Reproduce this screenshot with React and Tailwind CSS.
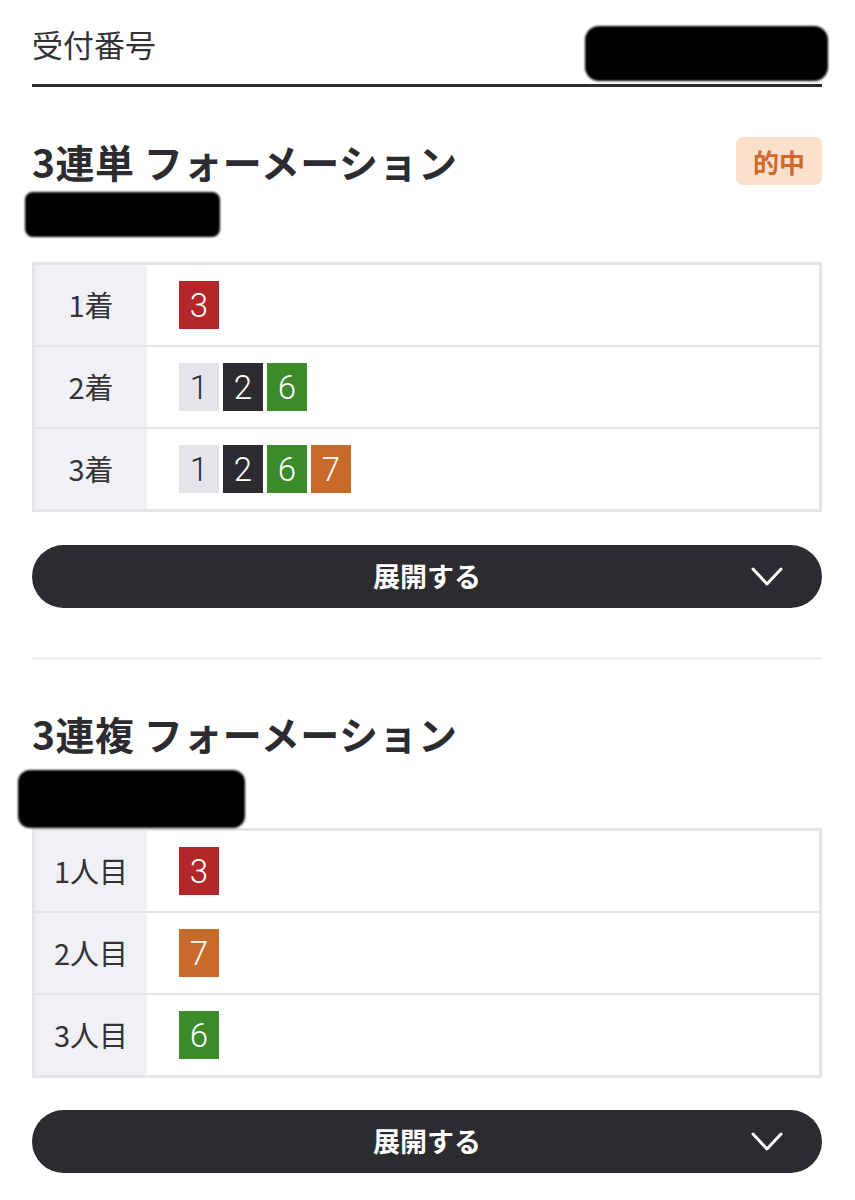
import React from "react";

const BOX = {
  red: "bg-[#b3262a] text-white",
  gray: "bg-[#e4e4e9] text-[#2c2c30]",
  dark: "bg-[#2c2c30] text-white",
  green: "bg-[#3b8b2b] text-white",
  orange: "bg-[#c86a29] text-white",
};

const COLOR = { 1: "gray", 2: "dark", 3: "red", 6: "green", 7: "orange" };

function Num({ n }) {
  return (
    <div
      className={`w-[40px] h-[48px] flex items-center justify-center text-[33px] font-light leading-none ${BOX[COLOR[n]]}`}
      style={{ fontFamily: "Roboto, 'Liberation Sans', sans-serif" }}
    >
      {n}
    </div>
  );
}

function Table({ rows }) {
  return (
    <div className="border-[3px] border-[#e4e4e9]">
      {rows.map((r, i) => (
        <div key={r.label} className={i === 0 ? "flex h-[80px]" : "flex h-[82px] border-t-2 border-[#e4e4e9]"}>
          <div className="w-[112px] bg-[#f0f0f5] flex items-center justify-center text-[29px] text-[#333336]">
            {r.label}
          </div>
          <div className="flex-1 flex items-center gap-[4px] pl-[32px]">
            {r.nums.map((n, j) => <Num key={j} n={n} />)}
          </div>
        </div>
      ))}
    </div>
  );
}

function ExpandButton() {
  return (
    <button className="relative w-full h-[63px] rounded-full bg-[#2c2c30] flex items-center justify-center">
      <span className="text-white text-[27px] font-bold">展開する</span>
      <svg className="absolute right-[38px] top-[20px]" width="34" height="24" viewBox="0 0 34 24" fill="none">
        <polyline points="3,4 17,19 31,4" stroke="white" strokeWidth="3" strokeLinecap="round" strokeLinejoin="round" />
      </svg>
    </button>
  );
}

export default function App() {
  return (
    <div className="bg-white min-h-[1200px] w-[855px] overflow-hidden" style={{ fontFamily: '"Noto Sans CJK JP", "Noto Sans", sans-serif' }}>
      <div className="mx-[32px] w-[790px]">
        <div className="h-[87px] flex items-center justify-between border-b-[3px] border-[#2c2c30] pt-[4px]">
          <div className="text-[31px] text-[#333336]">受付番号</div>
          <div className="w-[243px] h-[55px] bg-black rounded-[14px] -mr-[6px] mt-[18px] blur-[1px]" />
        </div>

        <div className="mt-[50px] h-[48px] flex items-center justify-between">
          <h2 className="text-[39px] font-bold text-[#2c2c30] tracking-[0.5px]">3連単 フォーメーション</h2>
          <div className="w-[86px] h-[48px] rounded-[7px] bg-[#fbe0cc] text-[#d0692a] text-[26px] font-bold flex items-center justify-center">的中</div>
        </div>
        <div className="mt-[7px] -ml-[7px] w-[195px] h-[45px] bg-black rounded-[8px] blur-[1px]" />

        <div className="mt-[25px]">
          <Table rows={[
            { label: "1着", nums: [3] },
            { label: "2着", nums: [1, 2, 6] },
            { label: "3着", nums: [1, 2, 6, 7] },
          ]} />
        </div>
        <div className="mt-[33px]"><ExpandButton /></div>

        <div className="mt-[49px] h-[3px] bg-[#f0f0f5]" />

        <div className="mt-[49px] h-[48px] flex items-center">
          <h2 className="text-[39px] font-bold text-[#2c2c30] tracking-[0.5px]">3連複 フォーメーション</h2>
        </div>
        <div className="mt-[13px] -ml-[14px] w-[227px] h-[58px] bg-black rounded-[12px] blur-[1px]" />

        <Table rows={[
          { label: "1人目", nums: [3] },
          { label: "2人目", nums: [7] },
          { label: "3人目", nums: [6] },
        ]} />
        <div className="mt-[32px]"><ExpandButton /></div>
      </div>
    </div>
  );
}
